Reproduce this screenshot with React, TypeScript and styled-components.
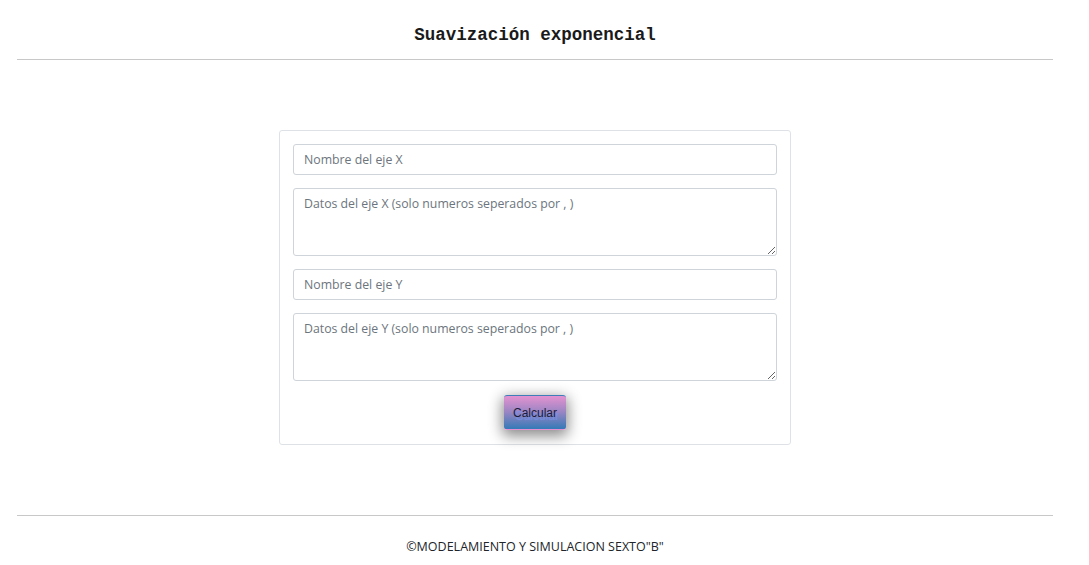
import React from "react";
import styled, { createGlobalStyle } from "styled-components";

const Global = createGlobalStyle`
  html, body { margin: 0; padding: 0; background: #fff; }
  body { font-family: "Open Sans", "Noto Sans", sans-serif; color: #212529; }
  * { box-sizing: border-box; }
`;

const Page = styled.div`
  display: flex;
  flex-direction: column;
  padding: 0 36px 0 17px;
`;

const Header = styled.header`
  height: 60px;
  display: flex;
  align-items: center;
  justify-content: center;
  border-bottom: 1px solid #c8c8c8;
  padding-top: 10px;
`;

const Title = styled.h1`
  margin: 0;
  font-family: "Liberation Mono", "DejaVu Sans Mono", monospace;
  font-weight: bold;
  font-size: 17.5px;
  color: #1a1a1a;
`;

const Main = styled.main`
  display: flex;
  justify-content: center;
  padding: 70px 0 70px;
`;

const Card = styled.form`
  width: 512px;
  border: 1px solid #dee2e6;
  border-radius: 3px;
  padding: 13px 13px 14px;
  display: flex;
  flex-direction: column;
  gap: 13px;
`;

const Input = styled.input`
  height: 31px;
  width: 100%;
  border: 1px solid #ced4da;
  border-radius: 3px;
  padding: 0 10px;
  font-family: "Open Sans", "Noto Sans", sans-serif;
  font-size: 12.3px;
  color: #495057;
  &::placeholder { color: #6c757d; }
`;

const Area = styled.textarea<{ $h: number }>`
  height: ${(p) => p.$h}px;
  width: 100%;
  border: 1px solid #ced4da;
  border-radius: 3px;
  padding: 6px 10px;
  font-family: "Open Sans", "Noto Sans", sans-serif;
  font-size: 12.3px;
  color: #495057;
  resize: vertical;
  &::placeholder { color: #6c757d; }
`;

const ButtonRow = styled.div`
  display: flex;
  justify-content: center;
  margin-top: 1px;
`;

const Button = styled.button`
  width: 62px;
  height: 35px;
  border: none;
  border-top: 1px solid #3e7db8;
  border-bottom: 1px solid #e58fd0;
  border-radius: 3px;
  background: linear-gradient(to bottom, #e492d0 0%, #a086c4 45%, #347ab7 100%);
  box-shadow: 0 4px 14px 2px rgba(0, 0, 0, 0.45);
  font-family: "Liberation Sans", Arial, sans-serif;
  font-size: 12px;
  color: #1c1c3a;
  text-shadow: 2px 3px 1px rgba(120, 145, 235, 0.9);
  padding: 0;
  cursor: pointer;
`;

const Footer = styled.footer`
  border-top: 1px solid #c8c8c8;
  height: 50px;
  display: flex;
  align-items: center;
  justify-content: center;
  padding-top: 12px;
  font-family: "Open Sans", "Noto Sans", sans-serif;
  font-size: 12.5px;
  color: #212529;
`;

export default function App() {
  return (
    <>
      <Global />
      <Page>
        <Header>
          <Title>Suavización exponencial</Title>
        </Header>
        <Main>
          <Card onSubmit={(e) => e.preventDefault()}>
            <Input placeholder="Nombre del eje X" />
            <Area $h={68} placeholder="Datos del eje X (solo numeros seperados por , )" />
            <Input placeholder="Nombre del eje Y" />
            <Area $h={68} placeholder="Datos del eje Y (solo numeros seperados por , )" />
            <ButtonRow>
              <Button type="submit">Calcular</Button>
            </ButtonRow>
          </Card>
        </Main>
        <Footer>©MODELAMIENTO Y SIMULACION SEXTO"B"</Footer>
      </Page>
    </>
  );
}
